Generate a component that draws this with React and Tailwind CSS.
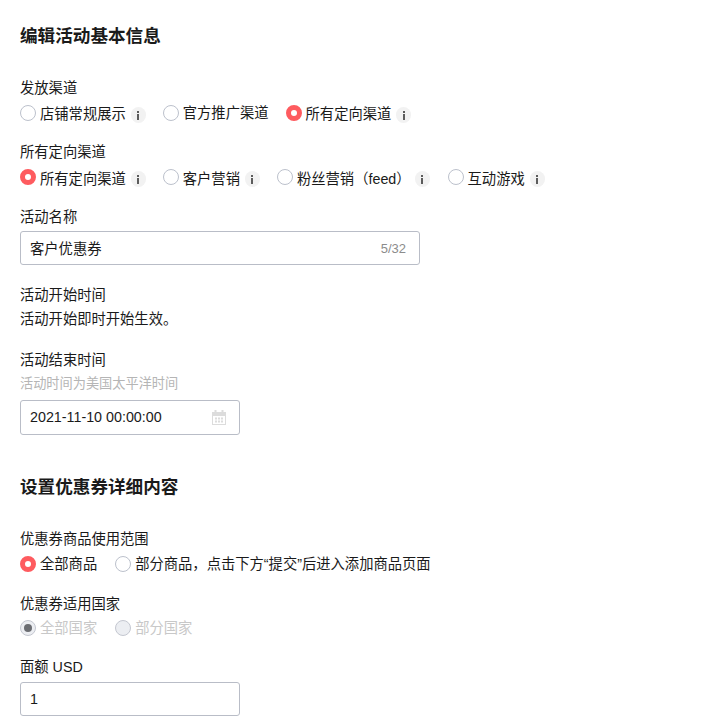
import React from "react";

const FONT = "font-['Liberation_Sans','Noto_Sans_CJK_SC',sans-serif]";

function Radio({ checked, disabled }) {
  if (disabled) {
    return (
      <span className="-mt-px flex h-4 w-4 shrink-0 items-center justify-center rounded-full border border-[#c4c7d0] bg-[#eceef2]">
        {checked && <span className="h-2 w-2 rounded-full bg-[#6b6d72]" />}
      </span>
    );
  }
  if (checked) {
    return <span className="-mt-px block h-4 w-4 shrink-0 rounded-full border-[5px] border-[#fe5b5f] bg-white" />;
  }
  return <span className="-mt-px block h-4 w-4 shrink-0 rounded-full border border-[#bcc1cc] bg-white" />;
}

function Info({ className = "" }) {
  return (
    <span className={`mt-1 flex h-4 w-[15px] shrink-0 items-center justify-center rounded-full bg-[#f2f2f2] ${className}`}>
      <svg width="4" height="9" viewBox="0 0 4 9" fill="#5c5c5c">
        <rect x="1" y="0" width="2" height="2" />
        <rect x="1" y="3" width="2" height="6" />
      </svg>
    </span>
  );
}

// textClass nudges the label down a bit, the reference text sits under the radio centre
function Option({ label, checked, disabled, info, infoClass, textClass = "", className = "" }) {
  return (
    <div className={`flex items-center ${className}`}>
      <Radio checked={checked} disabled={disabled} />
      <span className={`ml-1 ${textClass} ${disabled ? "text-[#c8c8c8]" : ""}`}>{label}</span>
      {info && <Info className={infoClass || "ml-[5px]"} />}
    </div>
  );
}

function Label({ children, className = "" }) {
  return <div className={`h-6 leading-6 ${className}`}>{children}</div>;
}

function Title({ children, className = "" }) {
  return <h2 className={`h-6 text-[17.6px] leading-6 font-bold ${className}`}>{children}</h2>;
}

export default function App() {
  return (
    <div className={`${FONT} h-[728px] overflow-hidden bg-white pt-6 pl-5 text-[14.3px] text-[#1a1a1a]`}>
      {/* 基本信息 */}
      <Title>编辑活动基本信息</Title>

      <Label className="mt-7">发放渠道</Label>
      <div className="mt-px flex h-6">
        <Option label="店铺常规展示" info textClass="pt-1" />
        <Option label="官方推广渠道" textClass="pt-[2px]" className="ml-[17px]" />
        <Option label="所有定向渠道" checked info textClass="pt-1" className="ml-[17px]" />
      </div>

      <Label className="mt-[15px]">所有定向渠道</Label>
      <div className="mt-px flex h-6">
        <Option label="所有定向渠道" checked info textClass="pt-[6px]" />
        <Option label="客户营销" info textClass="pt-[6px]" className="ml-[17px]" />
        <Option label="粉丝营销（feed）" info infoClass="ml-1" textClass="pt-[6px]" className="ml-[17px]" />
        <Option label="互动游戏" info textClass="pt-[6px]" className="ml-[18px]" />
      </div>

      <Label className="mt-[15px] pt-px">活动名称</Label>
      <div className="mt-[3px] flex h-[34px] w-[400px] items-center justify-between rounded-[3px] border border-[#b9bdc7] pr-[13px] pl-[9px]">
        <span className="pt-1">客户优惠券</span>
        <span className="pt-[2px] text-[13px] text-[#8c8c8c]">5/32</span>
      </div>

      <Label className="mt-[18px]">活动开始时间</Label>
      <Label>活动开始即时开始生效。</Label>

      <Label className="mt-4 pt-px">活动结束时间</Label>
      <div className="h-6 pt-px text-[13.2px] leading-6 text-[#b5b5b5]">活动时间为美国太平洋时间</div>
      <div className="mt-[5px] flex h-[35px] w-[220px] items-center justify-between rounded-[3px] border border-[#b9bdc7] pr-[13px] pl-[9px]">
        <span>2021-11-10 00:00:00</span>
        <svg width="14" height="15" viewBox="0 0 14 15" fill="#dcdcdc">
          <rect x="2.5" y="0" width="2" height="3" />
          <rect x="9.5" y="0" width="2" height="3" />
          <path d="M0 2h14v13H0z M1 6v8h12V6z" fillRule="evenodd" />
          <rect x="3" y="7.5" width="2" height="2" />
          <rect x="6" y="7.5" width="2" height="2" />
          <rect x="9" y="7.5" width="2" height="2" />
          <rect x="3" y="10.5" width="2" height="2" />
          <rect x="6" y="10.5" width="2" height="2" />
          <rect x="9" y="10.5" width="2" height="2" />
        </svg>
      </div>

      {/* 优惠券详细内容 */}
      <Title className="mt-10">设置优惠券详细内容</Title>

      <Label className="mt-7">优惠券商品使用范围</Label>
      <div className="mt-px flex h-6">
        <Option label="全部商品" checked textClass="pt-[2px]" />
        <Option label="部分商品，点击下方“提交”后进入添加商品页面" textClass="pt-[2px]" className="ml-[18px]" />
      </div>

      <Label className="mt-[15px] pt-px">优惠券适用国家</Label>
      <div className="mt-px flex h-6">
        <Option label="全部国家" checked disabled textClass="pt-[2px]" />
        <Option label="部分国家" disabled textClass="pt-[2px]" className="ml-[18px]" />
      </div>

      <Label className="mt-[15px]">面额 USD</Label>
      <div className="mt-[3px] flex h-[34px] w-[220px] items-center rounded-[3px] border border-[#b9bdc7] pl-[9px]">
        <span className="pt-[2px]">1</span>
      </div>
    </div>
  );
}
